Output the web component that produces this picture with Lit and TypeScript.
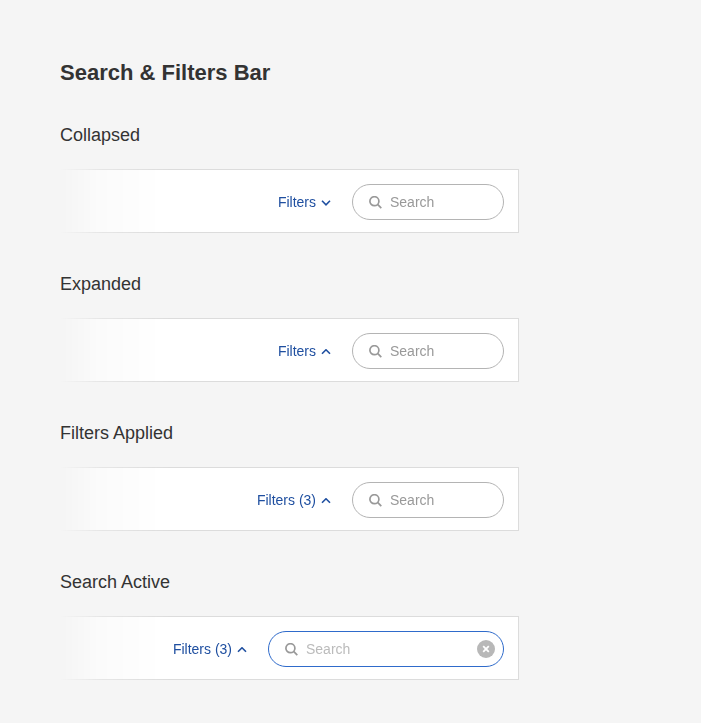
import { LitElement, html, css, svg, nothing } from "lit";
import { customElement, property } from "lit/decorators.js";

const chevronDown = svg`<path d="M1 0.8 5 4.8 9 0.8" />`;
const chevronUp = svg`<path d="M1 4.8 5 0.8 9 4.8" />`;

@customElement("search-filters-bar")
class SearchFiltersBar extends LitElement {
  @property({ type: Boolean }) expanded = false;
  @property({ type: Boolean, reflect: true }) active = false;
  @property({ type: Number }) applied = 0;

  static styles = css`
    :host {
      display: block;
    }
    .bar {
      box-sizing: border-box;
      display: flex;
      align-items: center;
      justify-content: flex-end;
      gap: 21px;
      padding: 14px 14px 12px;
      border: 1px solid #dcdcdc;
      border-left: 0;
      background: #fff;
      -webkit-mask-image: linear-gradient(to right, transparent, rgba(0, 0, 0, 0.6) 40px, #000 110px);
      mask-image: linear-gradient(to right, transparent, rgba(0, 0, 0, 0.6) 40px, #000 110px);
    }
    .filters {
      display: flex;
      align-items: center;
      gap: 5px;
      padding: 0;
      border: 0;
      background: none;
      color: #1f4fa0;
      font: 14px/20px "Liberation Sans", Arial, sans-serif;
      cursor: pointer;
    }
    .chevron {
      display: block;
      width: 10px;
      height: 6px;
      margin-top: 2px;
      fill: none;
      stroke: currentColor;
      stroke-width: 1.6;
    }
    .search {
      box-sizing: border-box;
      display: flex;
      align-items: center;
      gap: 8px;
      width: 152px;
      height: 36px;
      padding: 0 8px 0 16px;
      border: 1px solid #b4b4b4;
      border-radius: 18px;
    }
    :host([active]) .search {
      width: 236px;
      border-color: #2f6bcb;
    }
    .glass {
      flex: none;
      width: 13px;
      height: 13px;
      fill: none;
      stroke: #999;
      stroke-width: 1.7;
    }
    .field {
      flex: 1;
      min-width: 0;
      padding: 0;
      border: 0;
      outline: 0;
      background: none;
      color: #333;
      font: 14px/20px "Liberation Sans", Arial, sans-serif;
    }
    .field::placeholder {
      color: #999;
      opacity: 1;
    }
    :host([active]) .field::placeholder {
      color: #bbb;
    }
    .clear {
      flex: none;
      display: block;
      width: 18px;
      height: 18px;
      padding: 0;
      border: 0;
      border-radius: 9px;
      background: #b8b8b8;
      cursor: pointer;
    }
    .cross {
      display: block;
      width: 18px;
      height: 18px;
      stroke: #fff;
      stroke-width: 1.8;
    }
  `;

  render() {
    return html`
      <div class="bar">
        <button class="filters" type="button" aria-expanded=${this.expanded ? "true" : "false"}>
          <span>Filters${this.applied ? ` (${this.applied})` : nothing}</span>
          <svg class="chevron" viewBox="0 0 10 6" aria-hidden="true">
            ${this.expanded ? chevronUp : chevronDown}
          </svg>
        </button>
        <label class="search">
          <svg class="glass" viewBox="0 0 13 13" aria-hidden="true">
            <circle cx="5.4" cy="5.2" r="4.5" />
            <path d="M8.6 8.4 12.3 12.1" />
          </svg>
          <input class="field" type="text" placeholder="Search" aria-label="Search" />
          ${this.active
            ? html`<button class="clear" type="button" aria-label="Clear search">
                <svg class="cross" viewBox="0 0 18 18" aria-hidden="true">
                  <path d="M6.2 6.2 11.8 11.8M11.8 6.2 6.2 11.8" />
                </svg>
              </button>`
            : nothing}
        </label>
      </div>
    `;
  }
}

@customElement("app-root")
class AppRoot extends LitElement {
  static styles = css`
    :host {
      display: block;
      box-sizing: border-box;
      min-height: 100vh;
      padding: 59px 182px 40px 60px;
      background: #f5f5f5;
      color: #333;
      font-family: "Liberation Sans", Arial, sans-serif;
    }
    .title {
      margin: 0 0 36px;
      font-size: 22px;
      line-height: 28px;
      font-weight: 700;
    }
    .examples {
      display: grid;
      gap: 39px;
    }
    .state {
      margin: 0 0 22px;
      font-size: 18px;
      line-height: 24px;
      font-weight: 400;
    }
  `;

  private examples = [
    { name: "Collapsed", expanded: false, applied: 0, active: false },
    { name: "Expanded", expanded: true, applied: 0, active: false },
    { name: "Filters Applied", expanded: true, applied: 3, active: false },
    { name: "Search Active", expanded: true, applied: 3, active: true },
  ];

  render() {
    return html`
      <h1 class="title">Search &amp; Filters Bar</h1>
      <div class="examples">
        ${this.examples.map(
          (e) => html`
            <section>
              <h2 class="state">${e.name}</h2>
              <search-filters-bar
                ?expanded=${e.expanded}
                ?active=${e.active}
                .applied=${e.applied}
              ></search-filters-bar>
            </section>
          `
        )}
      </div>
    `;
  }
}
